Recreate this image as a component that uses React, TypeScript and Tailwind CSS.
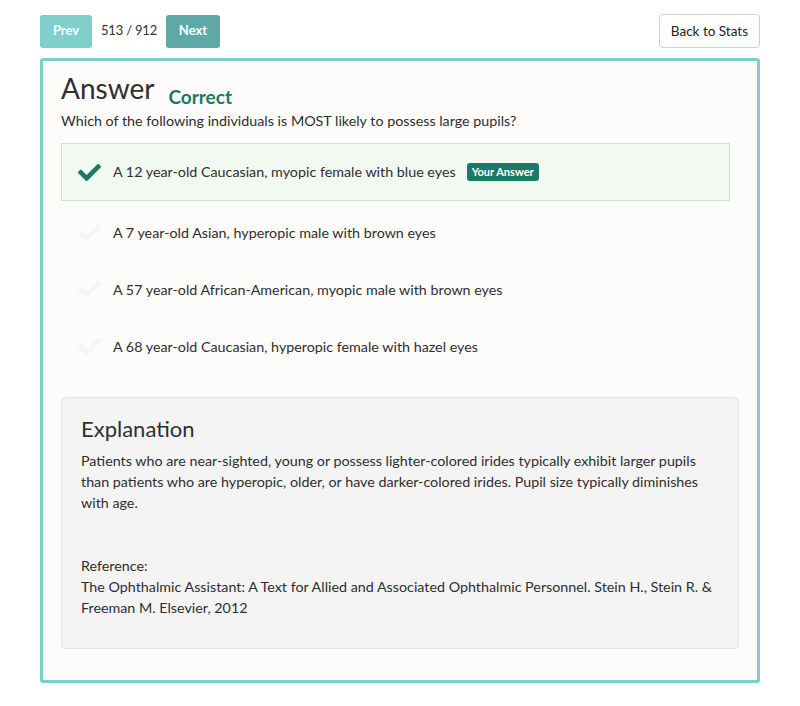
const options = [
    { text: "A 12 year-old Caucasian, myopic female with blue eyes", selected: true },
    { text: "A 7 year-old Asian, hyperopic male with brown eyes", selected: false },
    { text: "A 57 year-old African-American, myopic male with brown eyes", selected: false },
    { text: "A 68 year-old Caucasian, hyperopic female with hazel eyes", selected: false },
]

const CheckIcon = ({ className }: { className: string }) => (
    <svg viewBox="0 0 512 512" className={className} fill="currentColor">
        <path d="M173.9 439.4l-166.4-166.4c-10-10-10-26.2 0-36.2l36.2-36.2c10-10 26.2-10 36.2 0L192 312.7 432.1 72.6c10-10 26.2-10 36.2 0l36.2 36.2c10 10 10 26.2 0 36.2l-294.4 294.4c-10 10-26.2 10-36.2 0z" />
    </svg>
)

const OptionRow = ({ text, selected }: { text: string, selected: boolean }) => {
    return (
        <div
            className={
                selected
                    ? "flex items-center h-[58px] border border-[#cde5cb] bg-[#f2f9f1] mr-[9px] mb-[3px]"
                    : "flex items-center h-[57px] border border-transparent mr-[9px]"
            }
        >
            <div className="w-[51px] flex justify-end pr-[12px]">
                <CheckIcon className={selected ? "w-[23px] h-[23px] text-[#1b7a67]" : "w-[23px] h-[23px] text-[#f6f5f3]"} />
            </div>
            <span className="text-[14.3px] text-[#2e2e2e]">{text}</span>
            {selected && (
                <span className="ml-[11px] bg-[#1b7a67] text-white text-[11px] font-bold rounded-[3px] px-[5px] h-[18px] leading-[18px]">
                    Your Answer
                </span>
            )}
        </div>
    )
}

export default function App() {
    return (
        <div className="bg-white min-h-[706px] px-[40px] pt-[14px] font-['Lato',sans-serif] text-[#333]">
            <div className="flex items-center justify-between h-[34px]">
                <div className="flex items-center">
                    <button className="h-[33px] w-[52px] rounded-[3px] bg-[#7fcfcb] text-white text-[13px] font-bold">Prev</button>
                    <span className="mx-[9px] text-[13px] tracking-[-0.2px] text-[#333]">513 / 912</span>
                    <button className="h-[33px] w-[54px] rounded-[3px] bg-[#5ea9a7] text-white text-[13px] font-bold">Next</button>
                </div>
                <button className="h-[34px] px-[11px] rounded-[4px] border border-[#cfcfcf] bg-white text-[13.5px] text-[#222]">Back to Stats</button>
            </div>

            <div className="mt-[10px] border-[3px] border-[#7ecfcb] rounded-[3px] bg-[#fdfcfa] px-[18px] pt-[10px] pb-[31px]">
                <div className="flex items-end">
                    <h1 className="text-[28px] leading-[34px] text-[#2f2f2f]">Answer</h1>
                    <span className="ml-[14px] text-[19px] font-bold text-[#1b7a67] leading-[24px] mb-[-4px]">Correct</span>
                </div>
                <p className="text-[14.3px] mt-[6px] leading-[20px] text-[#2e2e2e]">Which of the following individuals is MOST likely to possess large pupils?</p>

                <div className="mt-[12px]">
                    {options.map((o) => (
                        <OptionRow key={o.text} text={o.text} selected={o.selected} />
                    ))}
                </div>

                <div className="mt-[22px] bg-[#f4f4f4] border border-[#e3e3e3] rounded-[4px] px-[19px] pt-[17px] pb-[30px]">
                    <h2 className="text-[22px] leading-[28px] text-[#2f2f2f]">Explanation</h2>
                    <p className="mt-[7px] text-[14.3px] leading-[21px] text-[#2e2e2e]">
                        Patients who are near-sighted, young or possess lighter-colored irides typically exhibit larger pupils than patients who are hyperopic, older, or have darker-colored irides. Pupil size typically diminishes with age.
                    </p>
                    <p className="mt-[42px] text-[14.3px] leading-[21px] text-[#2e2e2e]">
                        Reference:<br />
                        The Ophthalmic Assistant: A Text for Allied and Associated Ophthalmic Personnel. Stein H., Stein R. & Freeman M. Elsevier, 2012
                    </p>
                </div>
            </div>
        </div>
    )
}
